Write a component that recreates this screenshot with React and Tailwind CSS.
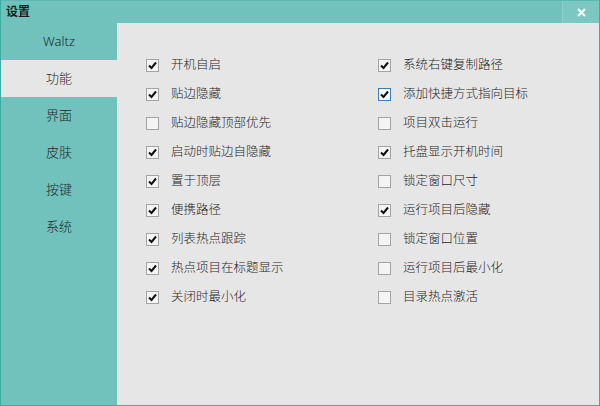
import React, { useState } from "react";

const FONT = { fontFamily: '"Noto Sans", "Noto Sans CJK SC", sans-serif' };

const NAV = ["Waltz", "功能", "界面", "皮肤", "按键", "系统"];

const LEFT = [
  ["开机自启", true],
  ["贴边隐藏", true],
  ["贴边隐藏顶部优先", false],
  ["启动时贴边自隐藏", true],
  ["置于顶层", true],
  ["便携路径", true],
  ["列表热点跟踪", true],
  ["热点项目在标题显示", true],
  ["关闭时最小化", true],
];

const RIGHT = [
  ["系统右键复制路径", true],
  ["添加快捷方式指向目标", true, true],
  ["项目双击运行", false],
  ["托盘显示开机时间", true],
  ["锁定窗口尺寸", false],
  ["运行项目后隐藏", true],
  ["锁定窗口位置", false],
  ["运行项目后最小化", false],
  ["目录热点激活", false],
];

const Check = ({ checked, focused }) => (
  <span
    className={`w-[13px] h-[13px] border flex items-center justify-center shrink-0 ${
      focused ? "border-[#3d7bbd] bg-white" : "border-[#a3a3a3] bg-[#f4f4f4]"
    }`}
  >
    {checked && (
      <svg width="11" height="11" viewBox="0 0 11 11">
        <path d="M2 5.5 L4.5 8 L9 2.5" fill="none" stroke="#111" strokeWidth="2" />
      </svg>
    )}
  </span>
);

const Option = ({ label, checked, focused }) => (
  <div className="h-[29px] flex items-center gap-[12px]">
    <Check checked={checked} focused={focused} />
    <span className="text-[12.5px] font-light text-[#262626] leading-none">{label}</span>
  </div>
);

export default function App() {
  const [active] = useState(1);

  return (
    <div
      style={FONT}
      className="w-[600px] h-[406px] flex flex-col bg-[#71c1bc] border-x border-b border-[#3aaea3] overflow-hidden"
    >
      {/* title bar */}
      <div className="h-[23px] flex items-stretch shrink-0 border-t border-[#5cb8b1]">
        <div className="flex-1 flex items-center pl-[5px] text-[12px] font-bold text-[#1c1c1c]">
          设置
        </div>
        <div className="w-[37px] flex items-center justify-center bg-[#7cc7c2] border-l border-[#8fd0cb]">
          <svg width="9" height="9" viewBox="0 0 9 9">
            <path d="M1 1 L8 8 M8 1 L1 8" stroke="#fff" strokeWidth="2" />
          </svg>
        </div>
      </div>

      <div className="flex-1 flex">
        {/* sidebar */}
        <div className="w-[116px] flex flex-col">
          {NAV.map((n, i) => (
            <div
              key={n}
              className={`h-[37px] flex items-center justify-center text-[13px] font-light text-[#1e2a2a] ${
                i === active ? "bg-[#e6e6e6]" : ""
              }`}
            >
              {n}
            </div>
          ))}
        </div>

        {/* content */}
        <div className="flex-1 bg-[#e6e6e6] pt-[28px] pl-[29px] flex">
          <div className="w-[232px] flex flex-col">
            {LEFT.map(([l, c]) => (
              <Option key={l} label={l} checked={c} />
            ))}
          </div>
          <div className="flex flex-col">
            {RIGHT.map(([l, c, f]) => (
              <Option key={l} label={l} checked={c} focused={f} />
            ))}
          </div>
        </div>
      </div>
    </div>
  );
}
